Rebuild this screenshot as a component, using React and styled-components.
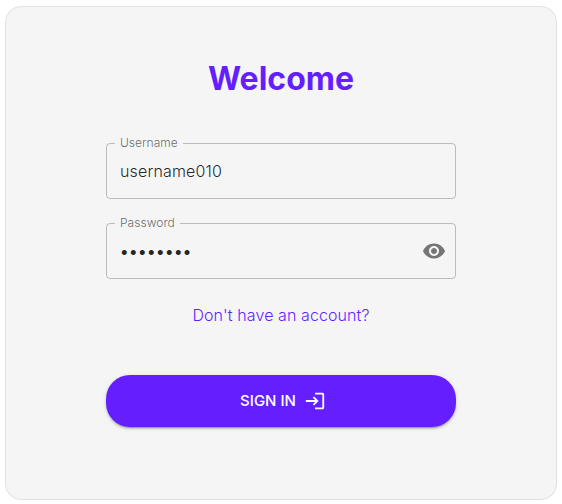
import React, { useState } from "react";
import styled, { createGlobalStyle } from "styled-components";

const GlobalStyle = createGlobalStyle`
  * { box-sizing: border-box; }
  body {
    margin: 0;
    background: #fff;
    font-family: Inter, "Liberation Sans", sans-serif;
    overflow: hidden;
  }
`;

const Card = styled.form`
  display: flex;
  flex-direction: column;
  align-items: center;
  width: 552px;
  height: 494px;
  margin: 6px 5px 4px;
  padding-top: 48px;
  background: #f5f5f5;
  border: 1px solid #e0e0e0;
  border-radius: 16px;
`;

const Title = styled.h1`
  margin: 0;
  height: 48px;
  color: #651fff;
  font-size: 32px;
  font-weight: 700;
  line-height: 48px;
`;

const Fields = styled.div`
  display: flex;
  flex-direction: column;
  gap: 19px;
  width: 350px;
  margin-top: 35px;
`;

const Field = styled.fieldset`
  display: flex;
  align-items: center;
  height: 61px;
  min-width: 0;
  margin: 0;
  padding: 0 9px 4px 8px;
  border: 1px solid rgba(0, 0, 0, 0.23);
  border-radius: 4px;
`;

const Label = styled.legend`
  height: 11px;
  padding: 0 5px;
  color: rgba(0, 0, 0, 0.6);
  font-size: 12px;
  font-weight: 300;
  letter-spacing: 0.04px;
  line-height: 9px;
`;

const Input = styled.input`
  flex: 1;
  min-width: 0;
  height: 44px;
  padding: 0 5px;
  border: 0;
  outline: 0;
  background: transparent;
  color: rgba(0, 0, 0, 0.87);
  font: 300 16px Inter, "Liberation Sans", sans-serif;
  font-weight: ${(p) => (p.type === "password" ? 500 : 300)};
  letter-spacing: ${(p) => (p.type === "password" ? "0.45px" : "0.15px")};
`;

const IconButton = styled.button`
  display: flex;
  padding: 0;
  border: 0;
  background: none;
  color: #757575;
  cursor: pointer;
`;

const Icon = styled.svg`
  width: ${(p) => p.$size}px;
  height: ${(p) => p.$size}px;
  fill: currentColor;
`;

const Link = styled.a`
  margin-top: 24px;
  color: #651fff;
  font-size: 16px;
  font-weight: 300;
  letter-spacing: 0.09px;
  line-height: 24px;
  text-decoration: none;
`;

const SubmitButton = styled.button`
  display: flex;
  align-items: center;
  justify-content: center;
  gap: 8px;
  width: 350px;
  height: 52px;
  margin-top: 48px;
  padding: 0 0 0 4px;
  border: 0;
  border-radius: 24px;
  background: #651fff;
  box-shadow: 0 3px 1px -2px rgba(0, 0, 0, 0.2), 0 2px 2px 0 rgba(0, 0, 0, 0.14),
    0 1px 5px 0 rgba(0, 0, 0, 0.12);
  color: #fff;
  font: 540 15px Inter, "Liberation Sans", sans-serif;
  text-transform: uppercase;
`;

const ButtonText = styled.span`
  padding-bottom: 2px;
`;

export default function App() {
  const [username, setUsername] = useState("username010");
  const [password, setPassword] = useState("password");
  const [visible, setVisible] = useState(false);

  return (
    <>
      <GlobalStyle />
      <Card onSubmit={(e) => e.preventDefault()}>
        <Title>Welcome</Title>
        <Fields>
          <Field>
            <Label>Username</Label>
            <Input
              aria-label="Username"
              value={username}
              onChange={(e) => setUsername(e.target.value)}
              spellCheck={false}
            />
          </Field>
          <Field>
            <Label>Password</Label>
            <Input
              aria-label="Password"
              type={visible ? "text" : "password"}
              value={password}
              onChange={(e) => setPassword(e.target.value)}
            />
            <IconButton type="button" aria-label="Toggle password" onClick={() => setVisible(!visible)}>
              <Icon $size={24} viewBox="0 0 24 24">
                <path d="M12 4.5C7 4.5 2.73 7.61 1 12c1.73 4.39 6 7.5 11 7.5s9.27-3.11 11-7.5c-1.73-4.39-6-7.5-11-7.5zM12 17c-2.76 0-5-2.24-5-5s2.24-5 5-5 5 2.24 5 5-2.24 5-5 5zm0-8c-1.66 0-3 1.34-3 3s1.34 3 3 3 3-1.34 3-3-1.34-3-3-3z" />
              </Icon>
            </IconButton>
          </Field>
        </Fields>
        <Link href="#">Don't have an account?</Link>
        <SubmitButton type="submit">
          <ButtonText>Sign in</ButtonText>
          <Icon $size={22} viewBox="0 0 24 24">
            <path d="M11 7 9.6 8.4l2.6 2.6H2v2h10.2l-2.6 2.6L11 17l5-5-5-5zm9 12h-8v2h8c1.1 0 2-.9 2-2V5c0-1.1-.9-2-2-2h-8v2h8v14z" />
          </Icon>
        </SubmitButton>
      </Card>
    </>
  );
}
